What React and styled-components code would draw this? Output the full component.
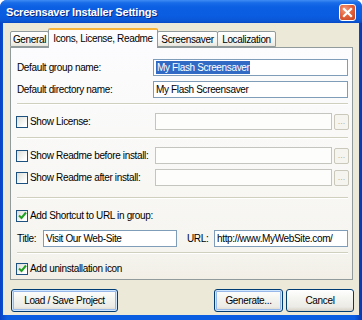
import React from 'react';
import styled, { createGlobalStyle } from 'styled-components';

const GlobalStyle = createGlobalStyle`
  html, body {
    margin: 0;
    padding: 0;
    background: #ffffff;
  }
  #root {
    width: 362px;
    height: 320px;
  }
  * {
    box-sizing: border-box;
  }
`;

const FONT = `"Liberation Sans", Arial, sans-serif`;

const Window = styled.div`
  width: 362px;
  height: 320px;
  display: flex;
  flex-direction: column;
  background: linear-gradient(to right, #0842c4, #0a5ce0 2%, #0a5ce0 98%, #0638b0);
  border-radius: 7px 7px 0 0;
  overflow: hidden;
  font-family: ${FONT};
  font-size: 10px;
  letter-spacing: -0.35px;
  color: #000;
`;

const TitleBar = styled.div`
  height: 23px;
  flex: none;
  display: flex;
  align-items: center;
  justify-content: space-between;
  padding: 0 6px 0 6px;
  background: linear-gradient(
    to bottom,
    #3f8cf3 0%,
    #1a6ce8 12%,
    #0b5fe2 30%,
    #0a5ce0 70%,
    #0a57d6 90%,
    #0848c4 100%
  );
`;

const Title = styled.span`
  color: #ffffff;
  font-weight: bold;
  font-size: 11px;
  letter-spacing: -0.2px;
  text-shadow: 1px 1px 0 #0a2a8a;
  padding-top: 1px;
`;

const CloseButton = styled.div`
  width: 17px;
  height: 17px;
  margin-top: 2px;
  border: 1px solid #ffffff;
  border-radius: 3px;
  background: radial-gradient(circle at 35% 30%, #f29c7e 0%, #e4643f 45%, #c4401c 100%);
  display: flex;
  align-items: center;
  justify-content: center;
`;

const Body = styled.div`
  flex: 1;
  margin: 0 3px 5px 3px;
  background: #ece9d8;
  padding: 5px 6px 3px 7px;
  display: flex;
  flex-direction: column;
`;

const TabStrip = styled.div`
  height: 20px;
  display: flex;
  align-items: flex-end;
  position: relative;
  z-index: 2;
`;

const Tab = styled.div`
  width: ${({ $w }) => $w}px;
  height: ${({ $active }) => ($active ? 20 : 16)}px;
  margin-bottom: ${({ $active }) => ($active ? 0 : 1)}px;
  display: flex;
  align-items: center;
  justify-content: center;
  padding-bottom: ${({ $active }) => ($active ? 2 : 0)}px;
  border: 1px solid #919b9c;
  border-bottom: ${({ $active }) => ($active ? 'none' : '1px solid #919b9c')};
  border-top: ${({ $active }) => ($active ? '2px solid #f7b43b' : '1px solid #919b9c')};
  border-radius: 2px 2px 0 0;
  background: ${({ $active }) =>
    $active
      ? '#fcfcfe'
      : 'linear-gradient(to bottom, #ffffff, #f4f3ee 70%, #e8e6dc)'};
  margin-left: ${({ $overlapLeft }) => ($overlapLeft ? -1 : 0)}px;
  white-space: nowrap;
`;

const Panel = styled.div`
  height: 233px;
  margin-top: -1px;
  border: 1px solid #919b9c;
  background: linear-gradient(to bottom, #fcfcfe, #f6f5f0 85%, #f1efe6);
  padding: 0 4px 0 6px;
  display: flex;
  flex-direction: column;
  position: relative;
  z-index: 1;
`;

const Row = styled.div`
  height: 17px;
  margin-top: ${({ $mt }) => $mt}px;
  display: grid;
  grid-template-columns: ${({ $cols }) => $cols};
  column-gap: ${({ $gap }) => $gap || 0}px;
  align-items: center;
`;

const Label = styled.span`
  white-space: nowrap;
`;

const Separator = styled.div`
  height: 2px;
  margin-top: ${({ $mt }) => $mt}px;
  border-top: 1px solid #d0d0bf;
  border-bottom: 1px solid #ffffff;
`;

const Input = styled.div`
  height: 17px;
  display: flex;
  align-items: center;
  padding-left: 2px;
  border: 1px solid ${({ $disabled }) => ($disabled ? '#c5c5c0' : '#7f9db9')};
  background: ${({ $disabled }) => ($disabled ? '#fdfdfb' : '#ffffff')};
  white-space: nowrap;
  overflow: hidden;
`;

const Selected = styled.span`
  background: #316ac5;
  color: #ffffff;
  padding: 1px 1px 1px 1px;
`;

const Browse = styled.div`
  height: 16px;
  border: 1px solid #cac8bb;
  border-radius: 2px;
  background: #f5f4ee;
  color: #b7b4a4;
  font-size: 9px;
  letter-spacing: 0;
  display: flex;
  align-items: flex-end;
  justify-content: center;
  line-height: 1;
  padding-bottom: 3px;
`;

const CheckLabel = styled.label`
  display: flex;
  align-items: center;
  gap: 2px;
  white-space: nowrap;
  margin-left: -1px;
`;

const Box = styled.span`
  flex: none;
  width: 12px;
  height: 12px;
  border: 1px solid #1c5180;
  background: linear-gradient(135deg, #dcdcd7, #ffffff 80%);
  display: inline-flex;
  align-items: center;
  justify-content: center;
`;

const ButtonRow = styled.div`
  margin-top: 9px;
  height: 23px;
  display: flex;
  gap: 3px;
`;

const Button = styled.div`
  width: ${({ $w }) => $w}px;
  height: 23px;
  margin-left: ${({ $ml }) => $ml || '0'};
  margin-right: ${({ $mr }) => $mr || 0}px;
  display: flex;
  align-items: center;
  justify-content: center;
  border: 1px solid #003c74;
  border-radius: 3px;
  background: linear-gradient(to bottom, #ffffff, #f4f4f0 40%, #ecebe6 80%, #d6d0c5);
  box-shadow: ${({ $focus }) =>
    $focus ? 'inset 0 0 0 1px #cee7ff, inset 0 0 0 2px #98b8ea' : 'none'};
  white-space: nowrap;
`;

const Checkbox = ({ checked, children }) => (
  <CheckLabel>
    <Box>
      {checked && (
        <svg width="9" height="9" viewBox="0 0 9 9">
          <polyline points="1,4.5 3.5,7 8,1.5" fill="none" stroke="#21a121" strokeWidth="2" />
        </svg>
      )}
    </Box>
    {children}
  </CheckLabel>
);

const App = () => {
  return (
    <>
      <GlobalStyle />
      <Window>
        <TitleBar>
          <Title>Screensaver Installer Settings</Title>
          <CloseButton>
            <svg width="11" height="11" viewBox="0 0 11 11">
              <path d="M2 2 L9 9 M9 2 L2 9" stroke="#ffffff" strokeWidth="2.2" strokeLinecap="square" />
            </svg>
          </CloseButton>
        </TitleBar>
        <Body>
          <TabStrip>
            <Tab $w={39}>General</Tab>
            <Tab $w={110} $active $overlapLeft>Icons, License, Readme</Tab>
            <Tab $w={61} $overlapLeft>Screensaver</Tab>
            <Tab $w={59} $overlapLeft>Localization</Tab>
          </TabStrip>
          <Panel>
            <Row $mt={11} $cols="136px 195px">
              <Label>Default group name:</Label>
              <Input>
                <Selected>My Flash Screensaver</Selected>
              </Input>
            </Row>
            <Row $mt={5} $cols="136px 195px">
              <Label>Default directory name:</Label>
              <Input>My Flash Screensaver</Input>
            </Row>
            <Separator $mt={5} />
            <Row $mt={8} $cols="136px 177px 15px" $gap={2}>
              <Checkbox>Show License:</Checkbox>
              <Input $disabled />
              <Browse>...</Browse>
            </Row>
            <Separator $mt={7} />
            <Row $mt={8} $cols="136px 177px 15px" $gap={2}>
              <Checkbox>Show Readme before install:</Checkbox>
              <Input $disabled />
              <Browse>...</Browse>
            </Row>
            <Row $mt={5} $cols="136px 177px 15px" $gap={2}>
              <Checkbox>Show Readme after install:</Checkbox>
              <Input $disabled />
              <Browse>...</Browse>
            </Row>
            <Separator $mt={11} />
            <Row $mt={8} $cols="1fr">
              <Checkbox checked>Add Shortcut to URL in group:</Checkbox>
            </Row>
            <Row $mt={6} $cols="26px 134px 10px 27px 134px">
              <Label>Title:</Label>
              <Input>Visit Our Web-Site</Input>
              <span />
              <Label>URL:</Label>
              <Input>http://www.MyWebSite.com/</Input>
            </Row>
            <Separator $mt={5} />
            <Row $mt={6} $cols="1fr">
              <Checkbox checked>Add uninstallation icon</Checkbox>
            </Row>
          </Panel>
          <ButtonRow>
            <Button $w={107} $ml="1px" $focus>Load / Save Project</Button>
            <Button $w={69} $ml="auto" $focus>Generate...</Button>
            <Button $w={68} $mr={-1}>Cancel</Button>
          </ButtonRow>
        </Body>
      </Window>
    </>
  );
};

export default App;
